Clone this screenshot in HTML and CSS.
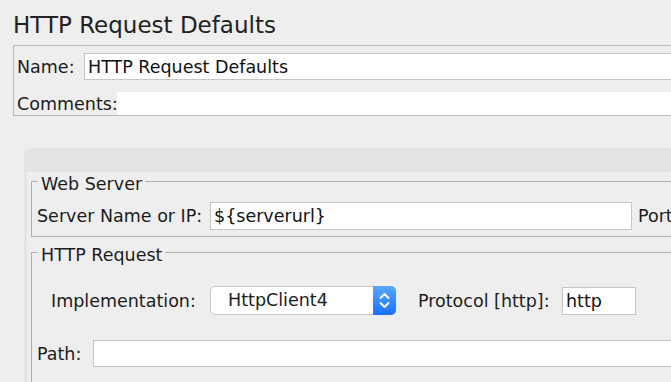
FILE: index.html
```html
<!DOCTYPE html>
<html lang="en">
  <head>
    <meta charset="UTF-8" />
    <meta name="viewport" content="width=device-width, initial-scale=1.0" />
    <title>HTTP Request Defaults</title>
    <link rel="stylesheet" href="styles.css">
  </head>
  <body>
    <h1 class="title">HTTP Request Defaults</h1>

    <div class="name-box">
      <div class="row row-name">
        <label class="lbl lbl-name" for="name">Name:</label>
        <input class="field field-name" type="text" id="name" value="HTTP Request Defaults" />
      </div>
      <div class="row row-comments">
        <label class="lbl lbl-comments" for="comments">Comments:</label>
        <input class="field field-comments" type="text" id="comments" />
      </div>
    </div>

    <div class="panel">
      <div class="tab-bar"></div>
      <div class="panel-body">
        <fieldset class="group group-server">
          <legend>Web Server</legend>
          <div class="row row-server">
            <label class="lbl lbl-server" for="server">Server Name or IP:</label>
            <input class="field field-server" type="text" id="server" value="${serverurl}" />
            <label class="lbl lbl-port" for="port">Port</label>
          </div>
        </fieldset>

        <fieldset class="group group-request">
          <legend>HTTP Request</legend>
          <div class="row row-impl">
            <label class="lbl lbl-impl">Implementation:</label>
            <div class="select">
              <span class="select-text">HttpClient4</span>
              <span class="select-arrow">
                <svg width="23" height="27" viewBox="0 0 23 27">
                  <path d="M7.5 11 L11.5 7 L15.5 11" fill="none" stroke="#fff" stroke-width="1.8" stroke-linecap="round" stroke-linejoin="round" />
                  <path d="M7.5 16 L11.5 20 L15.5 16" fill="none" stroke="#fff" stroke-width="1.8" stroke-linecap="round" stroke-linejoin="round" />
                </svg>
              </span>
            </div>
            <label class="lbl lbl-protocol" for="protocol">Protocol [http]:</label>
            <input class="field field-protocol" type="text" id="protocol" value="http" />
          </div>
          <div class="row row-path">
            <label class="lbl lbl-path" for="path">Path:</label>
            <input class="field field-path" type="text" id="path" />
          </div>
        </fieldset>
      </div>
    </div>
  </body>
</html>
```

FILE: styles.css
```css
body {
  margin: 0;
  background: #eeeeee;
  color: #1c1c1c;
  font-family: "DejaVu Sans", "Noto Sans", sans-serif;
  font-size: 17.5px;
  overflow: hidden;
  width: 671px;
  height: 382px;
}
.title {
  margin: 0 0 6px 13px;
  padding-top: 11px;
  font-size: 23px;
  font-weight: normal;
  line-height: 28px;
  color: #222;
}
.row {
  display: flex;
  align-items: center;
}
.lbl {
  flex: none;
  white-space: nowrap;
}
.field {
  flex: none;
  box-sizing: border-box;
  margin: 0;
  border: 1px solid #c6c6c6;
  background: #fff;
  font-family: inherit;
  font-size: inherit;
  color: #111;
  padding: 0 3px;
  outline: none;
}

/* name and comments */
.name-box {
  margin: 0 -30px 0 13px;
  height: 71px;
  box-sizing: border-box;
  border: 1px solid #b8b8b8;
  padding: 7px 0 0 3px;
}
.row-name {
  height: 27px;
}
.lbl-name {
  width: 67px;
}
.field-name {
  flex: 1;
  height: 27px;
  border-right: none;
}
.row-comments {
  margin-top: 12px;
  height: 23px;
}
.lbl-comments {
  width: 100px;
}
.field-comments {
  flex: 1;
  height: 23px;
  border: none;
}

/* tab panel */
.panel {
  margin: 32px -30px 0 24px;
  border-top-left-radius: 6px;
  border-left: 3px solid #e4e4e4;
  height: 234px;
  overflow: hidden;
}
.tab-bar {
  height: 24px;
  background: #e4e4e4;
  border-top-left-radius: 6px;
}
.panel-body {
  padding-left: 4px;
}
.group {
  margin: 0;
  padding: 0 0 0 5px;
  border: 1px solid #b0b0b0;
  border-right: none;
  min-width: 0;
}
.group legend {
  margin-left: 1px;
  padding: 6px 3px 0;
  line-height: 12px;
}
.group-server {
  padding-top: 12px;
  padding-bottom: 6px;
}
.row-server {
  height: 28px;
}
.lbl-server {
  width: 173px;
}
.field-server {
  width: 422px;
  height: 28px;
}
.lbl-port {
  margin-left: 6px;
}
.group-request {
  margin-top: 6px;
  padding-top: 25px;
  height: 150px;
}
.row-impl {
  height: 29px;
}
.lbl-impl {
  margin-left: 14px;
  width: 159px;
}
.select {
  box-sizing: border-box;
  display: flex;
  width: 186px;
  height: 29px;
  border: 1px solid #c8c8c8;
  border-radius: 5px;
  background: #fff;
}
.select-text {
  flex: 1;
  padding-left: 17px;
  line-height: 27px;
}
.select-arrow {
  width: 23px;
  margin: -1px -1px -1px 0;
  height: 29px;
  background: linear-gradient(#5aa8ff, #1672ff);
  border-radius: 0 5px 5px 0;
  display: flex;
  align-items: center;
  justify-content: center;
}
.lbl-protocol {
  margin-left: 22px;
  width: 144px;
}
.field-protocol {
  width: 74px;
  height: 28px;
}
.row-path {
  margin-top: 25px;
  height: 27px;
}
.lbl-path {
  width: 56px;
}
.field-path {
  flex: 1;
  height: 27px;
  border-right: none;
}
```
